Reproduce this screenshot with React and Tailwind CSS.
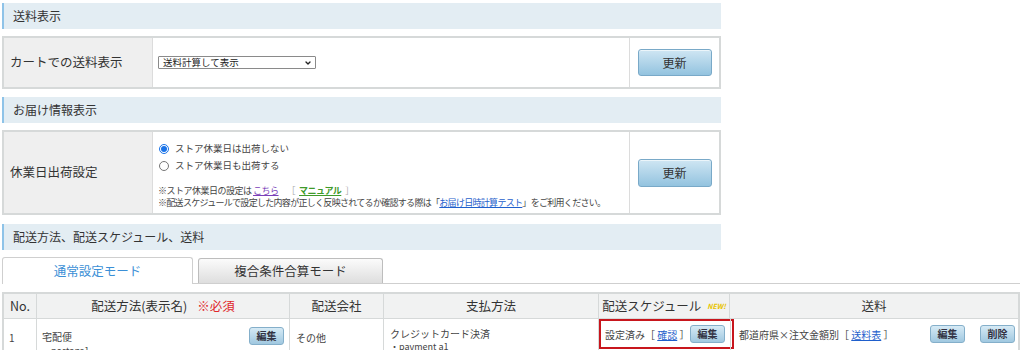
import { ChevronDown } from 'lucide-react';

const font = { fontFamily: '"Noto Sans CJK JP", "Liberation Sans", sans-serif' };

// セクション見出し
const SectionHeader = ({ title, className = '' }) => (
  <div className={`flex h-[26px] items-center border-l-2 border-[#8ec3e8] bg-[#e3edf3] pl-[9px] text-[12px] text-[#333] ${className}`}>
    {title}
  </div>
);

// 更新ボタン
const BlueButton = ({ children, className = '' }) => (
  <button className={`rounded-[3px] border border-[#79a9c8] bg-gradient-to-b from-[#cfe6f3] to-[#93c3df] text-[#333] shadow-[inset_0_1px_0_rgba(255,255,255,0.6)] ${className}`}>
    {children}
  </button>
);

const SmallButton = ({ children }) => (
  <button className="h-[18px] w-[35px] rounded-[3px] border border-[#84afca] bg-gradient-to-b from-[#d6eaf5] to-[#a0c8e0] text-[10px] font-bold leading-none text-[#334]">
    {children}
  </button>
);

const App = () => {
  return (
    <div className="h-[350px] w-[1024px] overflow-hidden bg-white text-[#333]" style={font}>
      <div className="w-[721px] pl-[2px] pt-[3px]">
        <SectionHeader title="送料表示" />

        {/* カートでの送料表示 */}
        <div className="mt-[7px] flex h-[53px] border-2 border-[#d6d9d9]">
          <div className="flex w-[149px] items-center border-r border-[#dcdcdc] bg-[#efefef] pl-[6px] text-[12.5px]">
            カートでの送料表示
          </div>
          <div className="flex flex-1 items-center border-r border-[#dcdcdc] pl-[5px]">
            <div className="flex h-[13px] w-[158px] items-center justify-between rounded-[1px] border border-[#8a8a8a] bg-white pl-[4px] pr-[3px] text-[9.5px] leading-none text-[#222]">
              <span>送料計算して表示</span>
              <ChevronDown className="h-[8px] w-[8px] text-[#222]" strokeWidth={4} />
            </div>
          </div>
          <div className="flex w-[89px] items-center justify-center">
            <BlueButton className="h-[27px] w-[74px] text-[12px]">更新</BlueButton>
          </div>
        </div>

        <SectionHeader title="お届け情報表示" className="mt-[8px]" />

        {/* 休業日出荷設定 */}
        <div className="mt-[7px] flex h-[85px] border-2 border-[#d6d9d9]">
          <div className="flex w-[149px] items-center border-r border-[#dcdcdc] bg-[#efefef] pl-[6px] text-[12.5px]">
            休業日出荷設定
          </div>
          <div className="flex flex-1 flex-col border-r border-[#dcdcdc] pl-[5px] pt-[8px] text-[9.5px] text-[#444]">
            <label className="flex h-[17px] shrink-0 items-center gap-[6px] pl-[1px]">
              <input type="radio" name="holiday" defaultChecked className="m-0 h-[10px] w-[10px] accent-[#1a73e8]" />
              ストア休業日は出荷しない
            </label>
            <label className="flex h-[17px] shrink-0 items-center gap-[6px] pl-[1px]">
              <input type="radio" name="holiday" className="m-0 h-[10px] w-[10px]" />
              ストア休業日も出荷する
            </label>
            <div className="mt-[11px] whitespace-nowrap text-[9px] leading-[12px] tracking-[-0.5px]">
              ※ストア休業日の設定は <span className="text-[#7a3fb8] underline">こちら</span>
              <span className="ml-[8px] text-[#aaa]">［</span>
              <span className="mx-[4px] font-bold text-[#3f9a2a] underline">マニュアル</span>
              <span className="text-[#aaa]">］</span>
            </div>
            <div className="whitespace-nowrap text-[9px] leading-[12px] tracking-[-0.7px]">
              ※配送スケジュールで設定した内容が正しく反映されてるか確認する際は「
              <span className="text-[#1f5fcc] underline">お届け日時計算テスト</span>
              」をご利用ください。
            </div>
          </div>
          <div className="flex w-[89px] items-center justify-center">
            <BlueButton className="h-[28px] w-[74px] text-[12px]">更新</BlueButton>
          </div>
        </div>

        <SectionHeader title="配送方法、配送スケジュール、送料" className="mt-[9px]" />
      </div>

      {/* タブ */}
      <div className="ml-[2px] mt-[8px] flex h-[26px] w-[1018px] items-end gap-[5px] border-b border-[#cfcfcf]">
        <div className="-mb-px flex h-[27px] w-[191px] items-center justify-center rounded-t-[3px] border border-b-0 border-[#cfcfcf] bg-white text-[12.5px] text-[#3b8fd6]">
          通常設定モード
        </div>
        <div className="flex h-[25px] w-[185px] items-center justify-center rounded-t-[3px] border border-b-0 border-[#bdbdbd] bg-gradient-to-b from-[#fbfbfb] to-[#dedede] text-[12.5px] text-[#333]">
          複合条件合算モード
        </div>
      </div>

      {/* 配送一覧 */}
      <div className="ml-[2px] mt-[8px] w-[1018px] border-2 border-b-0 border-[#d6d9d9]">
        <div className="flex h-[25px] items-center border-b border-[#d6d9d9] bg-[#f1f2f2] text-[12.5px]">
          <div className="flex h-full w-[33px] items-center justify-center border-r border-[#d6d9d9]">No.</div>
          <div className="flex h-full w-[253px] items-center justify-center gap-[10px] border-r border-[#d6d9d9]">
            配送方法(表示名) <span className="text-[#e0262a]">※必須</span>
          </div>
          <div className="flex h-full w-[94px] items-center justify-center border-r border-[#d6d9d9]">配送会社</div>
          <div className="flex h-full w-[215px] items-center justify-center border-r border-[#d6d9d9]">支払方法</div>
          <div className="flex h-full w-[131px] items-center justify-center gap-[6px] border-r border-[#d6d9d9]">
            配送スケジュール
            <span className="text-[7px] font-bold italic leading-none text-[#e8c400]">NEW!</span>
          </div>
          <div className="flex h-full flex-1 items-center justify-center">送料</div>
        </div>

        <div className="flex h-[34px] text-[10px] text-[#444]">
          <div className="w-[33px] border-r border-[#d6d9d9] pl-[5px] pt-[11px]">1</div>
          <div className="flex w-[253px] items-start justify-between border-r border-[#d6d9d9] pl-[5px] pr-[5px] pt-[8px]">
            <div className="leading-[14px]">
              <div className="pt-[3px]">宅配便</div>
              <div className="text-[9px]">・postage1</div>
            </div>
            <SmallButton>編集</SmallButton>
          </div>
          <div className="w-[94px] border-r border-[#d6d9d9] pl-[6px] pt-[11px]">その他</div>
          <div className="w-[215px] border-r border-[#d6d9d9] pl-[6px] pt-[8px] leading-[13px]">
            <div>クレジットカード決済</div>
            <div className="text-[9px]">・payment a1</div>
          </div>
          <div className="flex h-[30px] w-[135px] -mr-[4px] items-center justify-between border-2 border-[#c8161d] pl-[4px] pr-[7px]">
            <span>
              設定済み［ <span className="text-[#1f5fcc] underline">確認</span> ］
            </span>
            <SmallButton>編集</SmallButton>
          </div>
          <div className="flex flex-1 items-center justify-between border-l border-[#d6d9d9] pb-[4px] pl-[8px] pr-[3px]">
            <span>
              都道府県×注文金額別［ <span className="text-[#1f5fcc] underline">送料表</span> ］
            </span>
            <div className="flex gap-[15px]">
              <SmallButton>編集</SmallButton>
              <SmallButton>削除</SmallButton>
            </div>
          </div>
        </div>
      </div>
    </div>
  );
};

export default App;
